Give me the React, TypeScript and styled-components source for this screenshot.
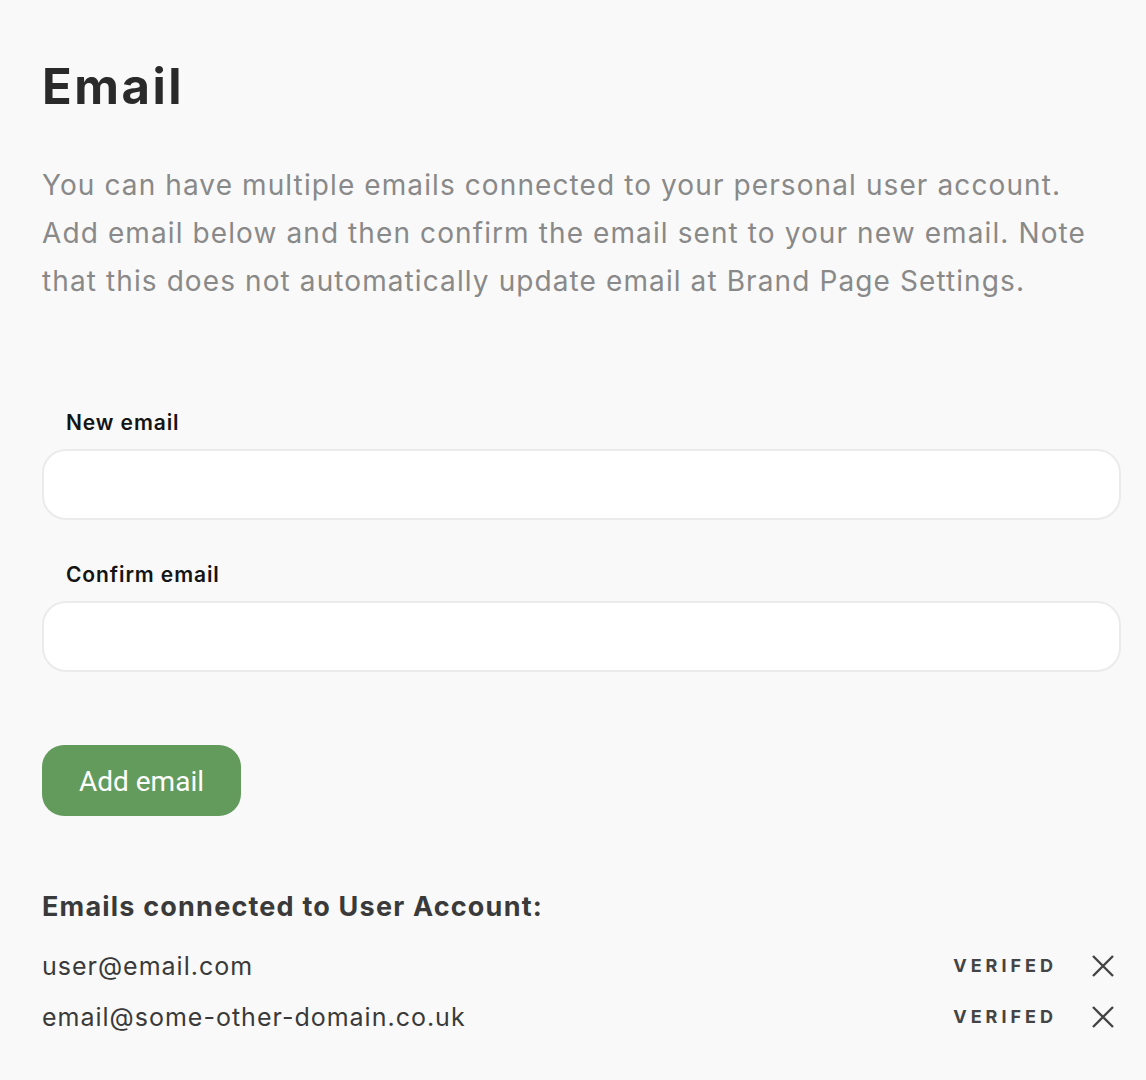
import styled, { createGlobalStyle } from 'styled-components';

const GlobalStyle = createGlobalStyle`
  html, body {
    margin: 0;
    padding: 0;
    background: #f9f9f9;
  }
  * {
    box-sizing: border-box;
  }
`;

const Page = styled.div`
  min-height: 1080px;
  padding: 55px 25px 40px 42px;
  font-family: Inter, 'Liberation Sans', sans-serif;
  background: #f9f9f9;
`;

const Title = styled.h1`
  margin: 0;
  font-size: 49px;
  line-height: 64px;
  font-weight: 700;
  letter-spacing: 2.5px;
  color: #2a2a2a;
`;

const Intro = styled.p`
  margin: 42px 0 0;
  font-size: 28px;
  line-height: 48px;
  letter-spacing: 1.1px;
  color: #898989;
  max-width: 1070px;
`;

const Form = styled.form`
  display: flex;
  flex-direction: column;
  margin-top: 105px;
`;

const Field = styled.div`
  display: flex;
  flex-direction: column;
  gap: 13px;
  margin-bottom: 42px;
`;

const Label = styled.label`
  padding-left: 24px;
  font-size: 21px;
  line-height: 26px;
  font-weight: 600;
  letter-spacing: 0.9px;
  color: #141414;
`;

const Input = styled.input`
  width: 100%;
  height: 71px;
  border: 2px solid #ebebeb;
  border-radius: 24px;
  background: #fff;
  padding: 0 24px;
  font-size: 22px;
  font-family: inherit;
  outline: none;
`;

const Button = styled.button`
  align-self: flex-start;
  margin-top: 31px;
  width: 199px;
  height: 71px;
  border: none;
  border-radius: 22px;
  background: #629b5c;
  color: #fff;
  font-family: Roboto, 'Liberation Sans', sans-serif;
  font-size: 28px;
  padding-top: 2px;
  cursor: pointer;
`;

const ListTitle = styled.h2`
  margin: 73px 0 15px;
  font-size: 27px;
  line-height: 36px;
  font-weight: 700;
  letter-spacing: 1.2px;
  color: #3a3a3a;
`;

const Row = styled.div`
  display: flex;
  align-items: center;
  height: 51px;
  color: #3a3a3a;
`;

const Address = styled.span`
  flex: 1;
  font-size: 25px;
  letter-spacing: 1px;
`;

const Status = styled.span`
  font-size: 18px;
  font-weight: 700;
  letter-spacing: 4px;
  color: #444;
  margin-right: 34px;
`;

const Remove = styled.button`
  display: flex;
  align-items: center;
  justify-content: center;
  width: 24px;
  height: 24px;
  padding: 0;
  margin-right: 6px;
  border: none;
  background: none;
  cursor: pointer;
`;

const emails = ['user@email.com', 'email@some-other-domain.co.uk'];

function CloseIcon() {
  return (
    <svg width="24" height="24" viewBox="0 0 24 24" fill="none">
      <path d="M2 2L22 22M22 2L2 22" stroke="#444" strokeWidth="2.4" />
    </svg>
  );
}

function App() {
  return (
    <>
      <GlobalStyle />
      <Page>
        <Title>Email</Title>
        <Intro>
          You can have multiple emails connected to your personal user account.
          Add email below and then confirm the email sent to your new email.
          Note that this does not automatically update email at Brand Page
          Settings.
        </Intro>
        <Form onSubmit={e => e.preventDefault()}>
          <Field>
            <Label htmlFor="new-email">New email</Label>
            <Input id="new-email" type="email" />
          </Field>
          <Field>
            <Label htmlFor="confirm-email">Confirm email</Label>
            <Input id="confirm-email" type="email" />
          </Field>
          <Button type="submit">Add email</Button>
        </Form>
        <ListTitle>Emails connected to User Account:</ListTitle>
        {emails.map(email => (
          <Row key={email}>
            <Address>{email}</Address>
            <Status>VERIFED</Status>
            <Remove aria-label="Remove">
              <CloseIcon />
            </Remove>
          </Row>
        ))}
      </Page>
    </>
  );
}

export default App;
